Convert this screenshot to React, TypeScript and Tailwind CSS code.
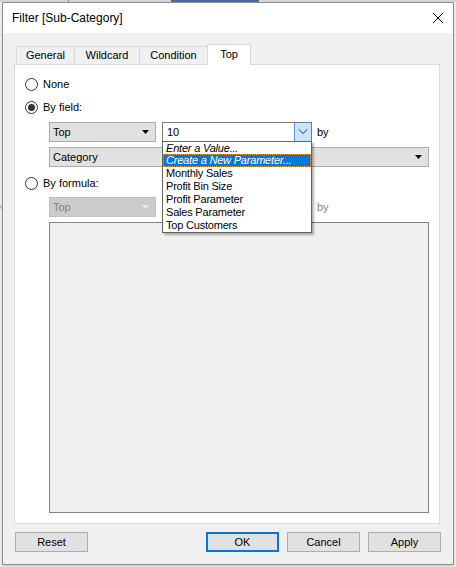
import React from "react";

function Radio({ checked, label }: { checked?: boolean; label: string }) {
  return (
    <div className="flex h-[16px] items-center pl-[10px]">
      <div className="flex h-[13px] w-[13px] items-center justify-center rounded-full border border-[#333333] bg-white">
        {checked && <div className="h-[7px] w-[7px] rounded-full bg-[#333333]" />}
      </div>
      <span className="ml-[5px] leading-none">{label}</span>
    </div>
  );
}

function Arrow({ color = "#000000" }: { color?: string }) {
  return (
    <svg width="7" height="4" viewBox="0 0 7 4" className="block">
      <polygon points="0,0 7,0 3.5,4" fill={color} />
    </svg>
  );
}

function Select({
  label,
  width,
  disabled,
}: {
  label: string;
  width: string;
  disabled?: boolean;
}) {
  return (
    <div
      className={
        disabled
          ? `flex h-[20px] ${width} items-center justify-between border border-[#bfbfbf] bg-[#cccccc] pl-[3px] pr-[6px] text-[#838383]`
          : `flex h-[20px] ${width} items-center justify-between border border-[#adadad] bg-[#e1e1e1] pl-[3px] pr-[6px]`
      }
    >
      <span className="leading-none">{label}</span>
      <Arrow color={disabled ? "#eeeeee" : "#000000"} />
    </div>
  );
}

function Button({ label, primary }: { label: string; primary?: boolean }) {
  return (
    <div
      className={
        primary
          ? "flex h-[20px] w-[73px] items-center justify-center border-2 border-[#0078d7] bg-[#e1e1e1]"
          : "flex h-[20px] w-[73px] items-center justify-center border border-[#adadad] bg-[#e1e1e1]"
      }
    >
      <span className="leading-none">{label}</span>
    </div>
  );
}

export default function App() {
  const items = [
    "Monthly Sales",
    "Profit Bin Size",
    "Profit Parameter",
    "Sales Parameter",
    "Top Customers",
  ];
  return (
    <div className="relative h-[567px] w-[456px] overflow-hidden bg-[#f2f2f2] font-['Liberation_Sans',Arial,sans-serif] text-[11px] text-black">
      {/* background strip at very top */}
      <div className="flex h-[2px] bg-[#d4d4d4]">
        <div className="ml-[68px] w-px bg-[#8a8a8a]" />
        <div className="ml-[102px] w-[88px] bg-[#4a6a95]" />
      </div>

      {/* window */}
      <div className="ml-[2px] flex h-[563px] w-[452px] flex-col border border-[#8f8f8f] bg-[#f0f0f0] shadow-[0_2px_3px_rgba(0,0,0,0.15)]">
        {/* title bar */}
        <div className="flex h-[30px] items-center justify-between bg-white pl-[9px] pr-[10px]">
          <span className="text-[12px] leading-none">Filter [Sub-Category]</span>
          <svg width="10" height="10" viewBox="0 0 10 10" className="block">
            <line x1="0" y1="0" x2="10" y2="10" stroke="#000" strokeWidth="1" />
            <line x1="10" y1="0" x2="0" y2="10" stroke="#000" strokeWidth="1" />
          </svg>
        </div>

        {/* body */}
        <div className="flex flex-1 flex-col pl-[11px] pt-[11px]">
          {/* tabs */}
          <div className="relative z-10 flex h-[20px] items-end pl-[2px]">
            <div className="flex h-[18px] w-[59px] items-center justify-center border border-b-0 border-[#d9d9d9] bg-[#f0f0f0]">
              <span className="leading-none">General</span>
            </div>
            <div className="-ml-px flex h-[18px] w-[66px] items-center justify-center border border-b-0 border-[#d9d9d9] bg-[#f0f0f0]">
              <span className="leading-none">Wildcard</span>
            </div>
            <div className="-ml-px flex h-[18px] w-[69px] items-center justify-center border border-b-0 border-[#d9d9d9] bg-[#f0f0f0]">
              <span className="leading-none">Condition</span>
            </div>
            <div className="-mb-px -ml-px flex h-[21px] w-[44px] items-center justify-center border border-b-0 border-[#d9d9d9] bg-white pb-[2px]">
              <span className="leading-none">Top</span>
            </div>
          </div>

          {/* panel */}
          <div className="flex h-[460px] w-[426px] flex-col border border-[#d9d9d9] bg-white">
            <div className="mt-[11px]">
              <Radio label="None" />
            </div>
            <div className="mt-[7px]">
              <Radio checked label="By field:" />
            </div>
            <div className="mt-[7px] flex items-center pl-[34px]">
              <Select label="Top" width="w-[107px]" />
              <div className="ml-[6px] flex h-[20px] w-[150px] items-center border border-[#7a7a7a] bg-white">
                <span className="flex-1 pl-[4px] leading-none">10</span>
                <div className="flex h-full w-[17px] items-center justify-center border-l border-[#569de5] bg-[#cce4f7]">
                  <svg width="10" height="6" viewBox="0 0 10 6" className="block">
                    <polyline points="1,0.5 5,4.5 9,0.5" fill="none" stroke="#333" strokeWidth="1" />
                  </svg>
                </div>
              </div>
              <span className="ml-[5px] leading-none">by</span>
            </div>
            <div className="mt-[5px] pl-[34px]">
              <Select label="Category" width="w-[380px]" />
            </div>
            <div className="mt-[8px]">
              <Radio label="By formula:" />
            </div>
            <div className="mt-[6px] flex items-center pl-[34px]">
              <Select label="Top" width="w-[107px]" disabled />
              <span className="ml-[161px] leading-none text-[#838383]">by</span>
            </div>
            <div className="ml-[34px] mt-[5px] h-[291px] w-[380px] border border-[#828282] bg-[#f0f0f0]" />
          </div>

          {/* buttons */}
          <div className="mt-[8px] flex w-[427px] pl-[1px]">
            <Button label="Reset" />
            <div className="flex-1" />
            <div className="flex gap-[8px]">
              <Button label="OK" primary />
              <Button label="Cancel" />
              <Button label="Apply" />
            </div>
          </div>
        </div>
      </div>

      {/* small background chevron at left edge */}
      <svg width="3" height="6" viewBox="0 0 3 6" className="absolute left-0 top-[204px] block">
        <polyline points="2.5,0.5 0.5,3 2.5,5.5" fill="none" stroke="#9a9a9a" strokeWidth="1" />
      </svg>

      {/* open dropdown list */}
      <div className="absolute left-[162px] top-[141px] flex w-[150px] flex-col border border-[#646464] bg-white shadow-[2px_2px_2px_rgba(0,0,0,0.3)]">
        <div className="flex h-[12px] items-center pl-[3px] italic leading-none tracking-[-0.2px]">
          Enter a Value...
        </div>
        <div className="flex h-[13px] items-center border border-dotted border-[#e8a040] bg-[#0078d7] pl-[2px] italic leading-none tracking-[-0.2px] text-white">
          Create a New Parameter...
        </div>
        {items.map((t) => (
          <div key={t} className="flex h-[13px] items-center pl-[3px] leading-none tracking-[-0.2px]">
            {t}
          </div>
        ))}
      </div>
    </div>
  );
}
